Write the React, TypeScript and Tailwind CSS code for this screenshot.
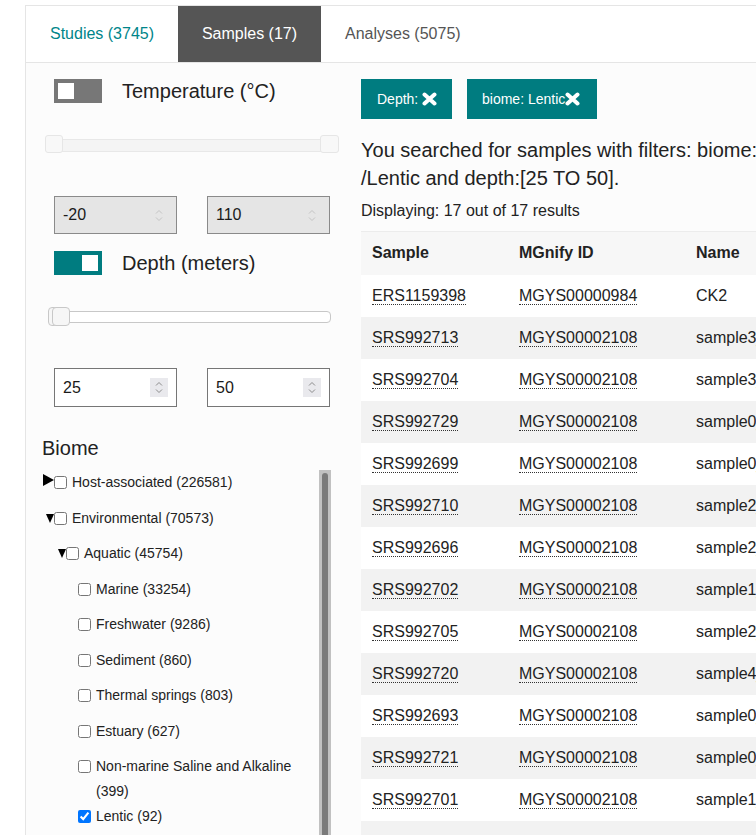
import React from "react";

type Node = {
  label: string;
  level: 0 | 1 | 2;
  caret?: "open" | "closed";
  checked?: boolean;
};

const tree: Node[] = [
  { label: "Host-associated (226581)", level: 0, caret: "closed" },
  { label: "Environmental (70573)", level: 0, caret: "open" },
  { label: "Aquatic (45754)", level: 1, caret: "open" },
  { label: "Marine (33254)", level: 2 },
  { label: "Freshwater (9286)", level: 2 },
  { label: "Sediment (860)", level: 2 },
  { label: "Thermal springs (803)", level: 2 },
  { label: "Estuary (627)", level: 2 },
  { label: "Non-marine Saline and Alkaline (399)", level: 2 },
  { label: "Lentic (92)", level: 2, checked: true },
  { label: "Lotic (64)", level: 2 },
];

const rows: [string, string, string][] = [
  ["ERS1159398", "MGYS00000984", "CK2"],
  ["SRS992713", "MGYS00002108", "sample3_12"],
  ["SRS992704", "MGYS00002108", "sample3_3"],
  ["SRS992729", "MGYS00002108", "sample0_8"],
  ["SRS992699", "MGYS00002108", "sample0_2"],
  ["SRS992710", "MGYS00002108", "sample2_9"],
  ["SRS992696", "MGYS00002108", "sample2_1"],
  ["SRS992702", "MGYS00002108", "sample1_4"],
  ["SRS992705", "MGYS00002108", "sample2_5"],
  ["SRS992720", "MGYS00002108", "sample4_6"],
  ["SRS992693", "MGYS00002108", "sample0_1"],
  ["SRS992721", "MGYS00002108", "sample0_7"],
  ["SRS992701", "MGYS00002108", "sample1_3"],
  ["SRS992714", "MGYS00002108", "sample3_6"],
];

const indent = ["pl-0", "pl-[12px]", "pl-[24px]"];

function Caret({ open }: { open: boolean }) {
  if (open) {
    return (
      <svg width="8" height="9" viewBox="0 0 8 9" className="ml-[4px] mt-[8px]">
        <path d="M0 0H8L4 9Z" fill="#000" />
      </svg>
    );
  }
  return (
    <svg width="11" height="12" viewBox="0 0 11 12" className="ml-[1px] mt-[4px]">
      <path d="M0 0L11 6L0 12Z" fill="#000" />
    </svg>
  );
}

function Spinner({ boxed }: { boxed?: boolean }) {
  return (
    <div
      className={
        boxed
          ? "flex h-[19px] w-[18px] items-center justify-center bg-[#e9e9ed]"
          : "flex h-[19px] w-[18px] items-center justify-center"
      }
    >
      <svg width="8" height="13" viewBox="0 0 8 13">
        <path
          d="M1 4.5L4 1.5L7 4.5M1 8.5L4 11.5L7 8.5"
          fill="none"
          stroke={boxed ? "#8c8c8c" : "#c4c4c4"}
          strokeWidth="1"
        />
      </svg>
    </div>
  );
}

function NumberBox({ value, disabled }: { value: string; disabled?: boolean }) {
  return (
    <div
      className={
        disabled
          ? "flex h-[38px] w-[123px] items-center justify-between border border-[#8a8a8a] bg-[#e5e5e5] pl-[8px] pr-[8px]"
          : "flex h-[39px] w-[123px] items-center justify-between border border-[#767676] bg-white pl-[8px] pr-[8px]"
      }
    >
      <span className="text-[16px] text-[#1a1a1a]">{value}</span>
      <Spinner boxed={!disabled} />
    </div>
  );
}

function Toggle({ on }: { on: boolean }) {
  return (
    <div
      className={
        on
          ? "flex h-[24px] w-[48px] items-center justify-end bg-[#007c80] px-[4px]"
          : "flex h-[24px] w-[48px] items-center justify-start bg-[#777777] px-[4px]"
      }
    >
      <div className="h-[16px] w-[16px] bg-white" />
    </div>
  );
}

function CloseIcon() {
  return (
    <svg width="15" height="14" viewBox="0 0 15 14">
      <path
        d="M2.5 2.5L12.5 11.5M12.5 2.5L2.5 11.5"
        stroke="#fff"
        strokeWidth="4"
        strokeLinecap="round"
      />
    </svg>
  );
}

export default function App() {
  return (
    <div className="h-[835px] w-[756px] overflow-hidden bg-white font-['Liberation_Sans',Arial,sans-serif] text-[#222]">
      <div className="ml-[25px] mt-[5px] h-[830px] border-l border-t border-[#e5e5e5]">
        {/* tabs */}
        <div className="flex h-[57px] border-b border-[#e5e5e5] bg-white text-[16px]">
          <div className="flex w-[152px] items-center justify-center text-[#00858a]">
            Studies (3745)
          </div>
          <div className="flex w-[143px] items-center justify-center bg-[#555555] text-white">
            Samples (17)
          </div>
          <div className="flex items-center px-[24px] text-[#555]">Analyses (5075)</div>
        </div>

        <div className="flex h-[772px] bg-[#fcfcfc]">
          {/* filters */}
          <div className="w-[335px] shrink-0 pl-[16px] pt-[16px]">
            <div className="ml-[12px] flex items-center gap-[20px]">
              <Toggle on={false} />
              <span className="text-[20px] leading-[24px]">Temperature (°C)</span>
            </div>

            <div className="relative ml-[3px] mt-[32px] h-[18px] w-[294px]">
              <div className="absolute left-0 right-0 top-[4px] h-[13px] rounded-[3px] border border-[#e8e8e8] bg-[#f4f4f4]" />
              <div className="absolute left-0 top-0 h-[18px] w-[18px] rounded-[3px] border border-[#e6e6e6] bg-[#f8f8f8]" />
              <div className="absolute right-0 top-0 h-[18px] w-[19px] rounded-[3px] border border-[#e6e6e6] bg-[#f8f8f8]" />
            </div>

            <div className="ml-[12px] mt-[43px] flex gap-[30px]">
              <NumberBox value="-20" disabled />
              <NumberBox value="110" disabled />
            </div>

            <div className="ml-[12px] mt-[17px] flex items-center gap-[20px]">
              <Toggle on />
              <span className="text-[20px] leading-[24px]">Depth (meters)</span>
            </div>

            <div className="relative ml-[6px] mt-[32px] h-[19px] w-[283px]">
              <div className="absolute left-0 right-0 top-[4px] h-[12px] rounded-[4px] border border-[#c8c8c8] bg-white" />
              <div className="absolute left-0 top-0 h-[19px] w-[18px] rounded-[4px] border border-[#c8c8c8] bg-[#f6f6f6]" />
              <div className="absolute left-[4px] top-0 h-[19px] w-[18px] rounded-[4px] border border-[#c8c8c8] bg-[#f6f6f6]" />
            </div>

            <div className="ml-[12px] mt-[42px] flex gap-[30px]">
              <NumberBox value="25" />
              <NumberBox value="50" />
            </div>

            <h3 className="mt-[27px] text-[20px] leading-[28px]">Biome</h3>

            <div className="mt-[8px] flex h-[400px] w-[289px]">
              <ul className="flex-1 text-[14px] leading-[25px]">
                {tree.map((n) => (
                  <li key={n.label} className={"flex min-h-[35.5px] items-start " + indent[n.level]}>
                    <div className="h-[25px] w-[12px] shrink-0">
                      {n.caret && <Caret open={n.caret === "open"} />}
                    </div>
                    <input
                      type="checkbox"
                      readOnly
                      checked={!!n.checked}
                      className="m-0 mt-[6px] h-[13px] w-[13px] shrink-0"
                    />
                    <span className="ml-[5px]">{n.label}</span>
                  </li>
                ))}
              </ul>
              <div className="flex h-full w-[12px] justify-center bg-[#c1c1c1] pt-[3px]">
                <div className="h-full w-[6px] rounded-t-[3px] bg-[#7a7a7a]" />
              </div>
            </div>
          </div>

          {/* results */}
          <div className="min-w-0 flex-1 pt-[16px]">
            <div className="flex gap-[15px]">
              <div className="flex h-[40px] w-[91px] items-center bg-[#007c80] pl-[16px] text-[14px] text-white">
                <span className="mr-[4px]">Depth:</span>
                <CloseIcon />
              </div>
              <div className="flex h-[40px] w-[130px] items-center bg-[#007c80] pl-[15px] text-[14px] text-white">
                <span>biome: Lentic</span>
                <CloseIcon />
              </div>
            </div>

            <p className="mt-[17px] whitespace-nowrap text-[20px] leading-[28px]">
              You searched for samples with filters: biome: root:Environmental:Aquatic
              <br />
              /Lentic and depth:[25 TO 50].
            </p>

            <div className="mt-[8px] text-[16px] leading-[22px]">Displaying: 17 out of 17 results</div>

            <table className="mt-[9px] w-[520px] border-collapse text-left text-[16px]">
              <thead>
                <tr className="h-[43px] border-t border-[#ececec] bg-[#f7f7f7]">
                  <th className="w-[147px] px-[11px] font-bold">Sample</th>
                  <th className="w-[177px] px-[11px] font-bold">MGnify ID</th>
                  <th className="px-[11px] font-bold">Name</th>
                </tr>
              </thead>
              <tbody>
                {rows.map(([s, m, n], i) => (
                  <tr key={s} className={i % 2 === 0 ? "h-[42px] bg-white" : "h-[42px] bg-[#f2f2f2]"}>
                    <td className="px-[11px]">
                      <span className="border-b border-dotted border-[#333]">{s}</span>
                    </td>
                    <td className="px-[11px]">
                      <span className="border-b border-dotted border-[#333]">{m}</span>
                    </td>
                    <td className="whitespace-nowrap px-[11px]">{n}</td>
                  </tr>
                ))}
              </tbody>
            </table>
          </div>
        </div>
      </div>
    </div>
  );
}
